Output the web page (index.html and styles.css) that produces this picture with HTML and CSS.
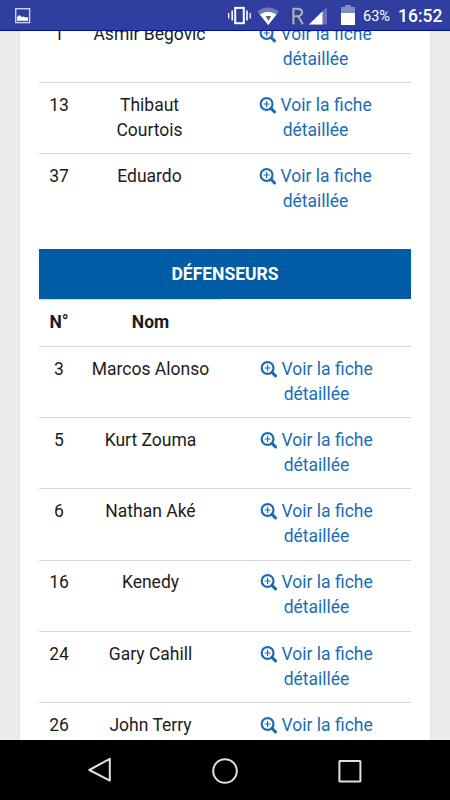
FILE: index.html
```
<!DOCTYPE html>
<html lang="fr">
<head>
<meta charset="utf-8">
<title>Effectif</title>
<link rel="stylesheet" href="styles.css">
</head>
<body>
<svg class="defs" width="0" height="0">
  <symbol id="zoom" viewBox="0 0 17 17">
    <circle cx="7.600" cy="7" r="5.900" fill="none" stroke="currentColor" stroke-width="2.200"/>
    <path d="M12 11.400L15.500 14.900" stroke="currentColor" stroke-width="2.900" stroke-linecap="round"/>
    <path d="M7.600 4v6M4.600 7h6" stroke="currentColor" stroke-width="1.200"/>
  </symbol>
</svg>
<header class="status">
  <svg class="picture" width="16" height="16" viewBox="0 0 16 16"><rect x=".7" y=".7" width="13.9" height="13.9" fill="none" stroke="#ced2ee" stroke-width="1.4"/><path d="M2 12.800V9.200l1.500-1.600 1.200-.3 2 1.700 2-.6 1.500 1 1.600-.4 1.200.8v3z" fill="#fff"/></svg>
  <svg class="signals" width="208" height="30" viewBox="0 0 208 30">
    <g fill="none" stroke="#fff"><rect x="5.200" y="7.900" width="8.600" height="15.300" stroke-width="2"/><path d="M2.200 10.500v10M17 10.500v10" stroke-width="1.600"/><path d="M-1.300 13v5.500M20.200 13v5.500" stroke-width="1.300"/></g>
    <path d="M27.300 11.500Q38 3.500 49 11.500L38.200 25z" fill="#7179bd"/>
    <path d="M29.800 14.500Q38 9 46.500 14.500L38.200 25z" fill="#fff"/>
    <path d="M35.600 16h5.600l-2.800 5z" fill="#666"/>
    <path d="M63.400 24.200V8.700h4c6.200 0 6.200 7.500 0 7.500h-4M68.300 16.200L72.800 24.200" fill="none" stroke="#b0b0b0" stroke-width="2.100"/>
    <path d="M79 24.500L97 7v17.500z" fill="#6871b9"/>
    <path d="M79 24.500L92.500 11.300v13.200z" fill="#fff"/>
    <path d="M111 13V7h4V5h6v2h4v6z" fill="#858cc7"/><path d="M111 13h14v12h-14z" fill="#fff"/>
  </svg>
  <span class="percent">63%</span>
  <span class="clock">16:52</span>
</header>
<main class="page">
  <section class="card">
    <div class="team first">
      <div class="row"><span>1</span><span>Asmir Begovic</span><a><svg><use href="#zoom"/></svg> Voir la fiche détaillée</a></div>
      <div class="row"><span>13</span><span>Thibaut Courtois</span><a><svg><use href="#zoom"/></svg> Voir la fiche détaillée</a></div>
      <div class="row"><span>37</span><span>Eduardo</span><a><svg><use href="#zoom"/></svg> Voir la fiche détaillée</a></div>
    </div>
    <div class="team">
      <h2>DÉFENSEURS</h2>
      <div class="row head"><span>N°</span><span>Nom</span></div>
      <div class="row"><span>3</span><span>Marcos Alonso</span><a><svg><use href="#zoom"/></svg> Voir la fiche détaillée</a></div>
      <div class="row"><span>5</span><span>Kurt Zouma</span><a><svg><use href="#zoom"/></svg> Voir la fiche détaillée</a></div>
      <div class="row"><span>6</span><span>Nathan Aké</span><a><svg><use href="#zoom"/></svg> Voir la fiche détaillée</a></div>
      <div class="row"><span>16</span><span>Kenedy</span><a><svg><use href="#zoom"/></svg> Voir la fiche détaillée</a></div>
      <div class="row"><span>24</span><span>Gary Cahill</span><a><svg><use href="#zoom"/></svg> Voir la fiche détaillée</a></div>
      <div class="row"><span>26</span><span>John Terry</span><a><svg><use href="#zoom"/></svg> Voir la fiche</a></div>
    </div>
  </section>
</main>
<nav class="navbar">
  <svg width="28" height="28" viewBox="0 0 28 28"><path d="M3.300 14L23.800 2.800v21.800z"/></svg>
  <svg width="28" height="28" viewBox="0 0 28 28"><circle cx="14" cy="15" r="11.800"/></svg>
  <svg width="28" height="28" viewBox="0 0 28 28"><rect x="3.400" y="5" width="21" height="20.500" rx=".5"/></svg>
</nav>
</body>
</html>
```
FILE: styles.css
```
* { box-sizing: border-box; }
body {
  margin: 0;
  width: 450px;
  height: 800px;
  display: flex;
  flex-direction: column;
  overflow: hidden;
  background: #ebebeb;
  font-family: Roboto, "Liberation Sans", sans-serif;
  color: #1c1c1c;
}
.defs { position: absolute; }
.status {
  flex: none;
  height: 31px;
  display: flex;
  align-items: flex-start;
  background: #303f9f;
  border-bottom: 1px solid #000e98;
  color: #fff;
}
.picture { margin: 8px 0 0 15px; }
.signals { flex: none; width: 208px; margin: 0 -75px 0 199px; overflow: visible; }
.percent { font-size: 14.500px; line-height: 33px; width: 35px; }
.clock { font-size: 17.500px; font-weight: 500; line-height: 33px; }
.page { flex: 1; min-height: 0; overflow: hidden; padding: 0 20px; }
.card {
  background: #fff;
  padding: 0 19px;
  height: 100%;
  overflow: hidden;
  box-shadow: 0 0 1px #bbb;
}
.team {
  font-size: 17.500px;
  line-height: 25px;
  text-align: center;
  margin-bottom: 24.700px;
}
.first { margin-top: -20px; }
.row {
  display: grid;
  grid-template-columns: 40px 143px 189px;
  height: 71.200px;
  padding-top: 9.900px;
  border-top: 1px solid #d7d7d7;
}
.row > span:nth-child(2) { padding: 0 10px; }
.row a { color: #1a6db5; padding: 0 28px; }
.first .row { grid-template-columns: 40px 141px 191px; }
.row svg { width: 17px; height: 17px; vertical-align: -3px; }
h2 {
  margin: 0;
  height: 49.500px;
  background: #005ca5;
  color: #fff;
  font-size: 17.500px;
  font-weight: 700;
  line-height: 50px;
}
.row.head {
  height: 47.200px;
  padding-top: 11px;
  font-weight: 700;
  border-top: 0;
  background: linear-gradient(#d7d7d7, #d7d7d7) no-repeat 0 0 / 183px 1px;
}
.navbar {
  flex: 0 0 60px;
  background: #000;
  display: flex;
  justify-content: space-between;
  padding: 16px 86px;
}
.navbar svg { fill: none; stroke: #e0e0e0; stroke-width: 2; stroke-linejoin: round; }
```
